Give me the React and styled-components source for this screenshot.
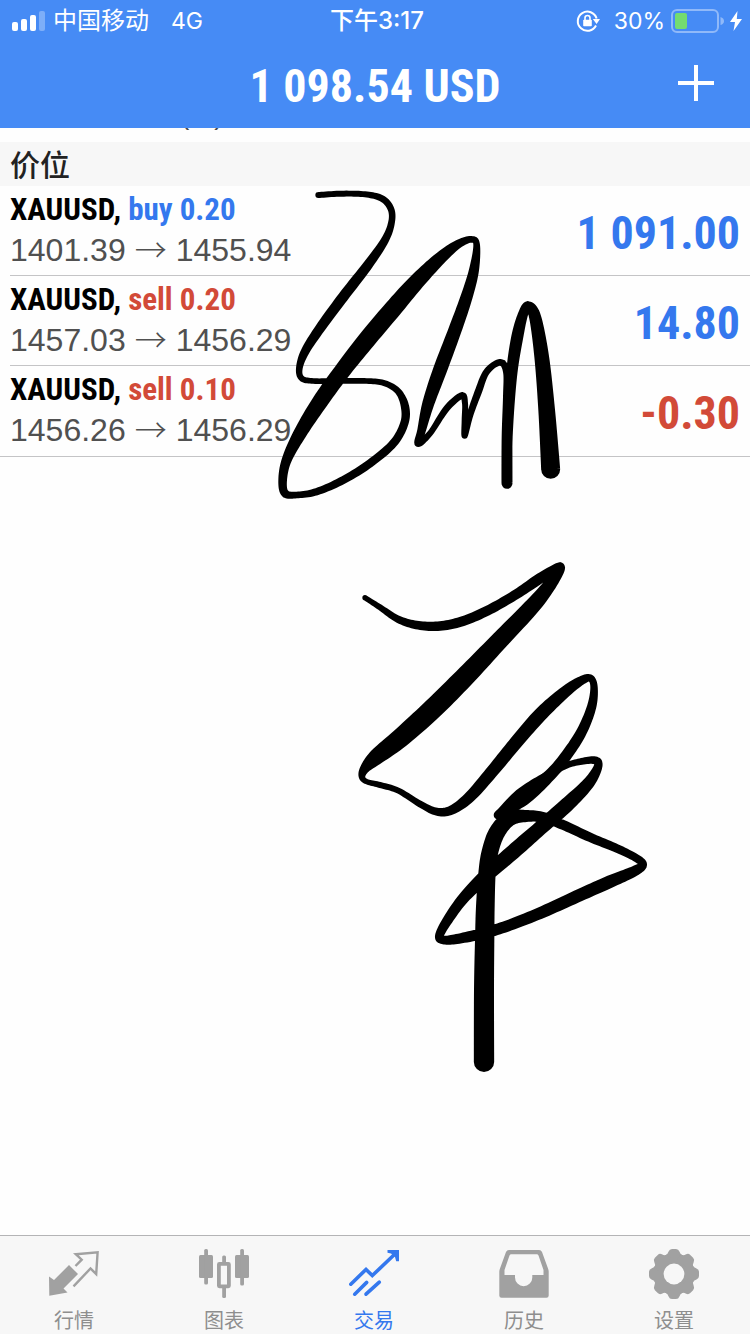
import React from 'react';
import styled, { createGlobalStyle } from 'styled-components';

const BLUE = '#3478ee';
const RED = '#d24a38';
const GREY = '#a1a1a1';
const BAR = '#f7f7f7';
const CONDENSED = '"Roboto Condensed", "Liberation Sans", sans-serif';

const GlobalStyle = createGlobalStyle`
  * { box-sizing: border-box; }
  body {
    margin: 0;
    background: #fefefe;
    font-family: "Liberation Sans", "Noto Sans CJK SC", sans-serif;
  }
`;

const Page = styled.div`
  position: relative;
  display: flex;
  flex-direction: column;
  min-height: 100vh;
`;

const Header = styled.header`
  background: #468bf5;
  color: #fff;
`;

const StatusBar = styled.div`
  display: grid;
  grid-template-columns: 1fr auto 1fr;
  align-items: center;
  height: 40px;
  padding: 2px 8px 0 12px;
  font-family: Inter, "Noto Sans CJK SC", sans-serif;
  font-size: 23px;
  line-height: 38px;
`;

const StatusGroup = styled.div`
  display: flex;
  align-items: center;
  justify-content: ${(p) => (p.$end ? 'flex-end' : 'flex-start')};
  gap: ${(p) => p.$gap}px;
`;

const Carrier = styled.span`
  font-size: 24px;
  margin-right: 14px;
`;

const Time = styled.time`
  font-size: 24px;
  font-weight: 500;
`;

const Rotation = styled.svg`
  margin-right: 8px;
`;

const TitleBar = styled.div`
  display: grid;
  grid-template-columns: 1fr auto 1fr;
  align-items: center;
  height: 88px;
  padding: 0 34px;
`;

const Title = styled.h1`
  grid-column: 2;
  margin: 0;
  padding-top: 4px;
  font-family: ${CONDENSED};
  font-size: 46px;
  line-height: 84px;
  font-weight: 700;
`;

const AddButton = styled.button`
  display: flex;
  justify-self: end;
  padding: 0;
  border: 0;
  background: none;
  color: inherit;
`;

const Main = styled.main`
  flex: 1;
`;

const ScrolledRow = styled.div`
  display: flex;
  flex-direction: column;
  justify-content: flex-end;
  height: 14px;
  padding: 0 0 13px 180px;
  overflow: hidden;
  color: #4a4a4a;
  font-size: 28px;
  line-height: 28px;
`;

const SectionTitle = styled.h2`
  margin: 0;
  padding: 4px 10px 0;
  background: ${BAR};
  color: #222;
  font-size: 30px;
  line-height: 40px;
  font-weight: 500;
`;

const Positions = styled.ul`
  margin: 0;
  padding: 0;
  list-style: none;
  border-bottom: 1px solid #c4c4c6;
`;

const Position = styled.li`
  display: flex;
  align-items: center;
  justify-content: space-between;
  height: 90px;
  margin-left: 10px;
  padding-right: 10px;
  &:not(:last-child) { border-bottom: 1px solid #c4c4c6; }
`;

const Details = styled.div`
  padding-bottom: 2px;
`;

const Symbol = styled.div`
  font-family: ${CONDENSED};
  font-size: 31px;
  line-height: 40px;
  font-weight: 700;
  color: #000;
`;

const Side = styled.span`
  color: ${(p) => (p.$sell ? RED : BLUE)};
`;

const Prices = styled.div`
  display: flex;
  gap: 9px;
  color: #505050;
  font-size: 32px;
  line-height: 40px;
`;

const Arrow = styled.span`
  font-family: "Noto Sans CJK SC", sans-serif;
  font-weight: 300;
  line-height: 36px;
`;

const Profit = styled.div`
  padding-top: 4px;
  font-family: ${CONDENSED};
  font-size: 46px;
  line-height: 84px;
  font-weight: 700;
  color: ${(p) => (p.$loss ? RED : BLUE)};
`;

const TabBar = styled.nav`
  display: flex;
  height: 99px;
  border-top: 1px solid #b4b4b6;
  background: ${BAR};
`;

const Tab = styled.a`
  flex: 1;
  display: flex;
  flex-direction: column;
  align-items: center;
  gap: 9px;
  padding: 13px 2px 0 0;
  color: ${(p) => (p.$active ? BLUE : GREY)};
  text-decoration: none;
`;

const TabLabel = styled.span`
  color: ${(p) => (p.$active ? BLUE : '#8e8e8e')};
  font-size: 20px;
  line-height: 26px;
`;

const InkLayer = styled.svg`
  position: absolute;
  top: 0;
  left: 0;
  width: 100%;
  pointer-events: none;
`;

/* Pen points are [x, y, width] in thirds of a pixel, relative to each stroke's origin. */
const strokes = [
  {
    origin: [270, 170],
    points: [
      [145, 75, 18], [215, 71, 18], [285, 73, 18], [335, 85, 20], [362, 115, 20], [365, 155, 20],
      [345, 210, 24], [290, 290, 30], [220, 380, 32], [150, 475, 30], [105, 545, 26], [88, 595, 20],
      [95, 625, 18], [130, 633, 17], [200, 633, 17], [290, 633, 17], [345, 640, 18], [385, 665, 20],
      [405, 710, 25], [403, 760, 25], [370, 820, 25], [300, 880, 25], [220, 930, 24], [140, 965, 22],
      [80, 975, 20], [45, 970, 24], [38, 930, 26], [50, 870, 30], [90, 790, 40], [150, 695, 48],
      [215, 605, 50], [290, 510, 54], [370, 415, 54], [440, 335, 48], [510, 265, 38], [565, 222, 26],
      [605, 208, 20], [620, 225, 20], [612, 300, 30], [590, 380, 36], [555, 480, 40], [510, 600, 42],
      [475, 700, 36], [455, 780, 26], [445, 820, 22], [480, 790, 18], [530, 715, 20], [575, 677, 20],
      [585, 700, 18], [584, 750, 18], [584, 797, 18], [600, 735, 20], [625, 665, 22], [650, 605, 20],
      [690, 577, 20], [710, 605, 22], [712, 680, 26], [711, 800, 32], [711, 940, 33], [712, 800, 32],
      [724, 620, 34], [742, 500, 36], [760, 430, 30], [775, 408, 28], [795, 440, 36], [815, 560, 44],
      [830, 720, 50], [842, 898, 57],
    ],
  },
  {
    origin: [340, 550],
    points: [
      [75, 143, 16], [120, 172, 18], [175, 208, 22], [235, 226, 26], [300, 228, 29], [370, 213, 30],
      [450, 178, 30], [530, 132, 30], [600, 85, 32], [660, 50, 26], [640, 90, 36], [580, 165, 48],
      [480, 270, 54], [380, 375, 60], [280, 475, 62], [180, 565, 58], [110, 620, 48], [75, 655, 30],
      [66, 680, 20], [80, 695, 16], [120, 705, 18], [175, 722, 18], [240, 762, 20], [290, 785, 24],
      [335, 780, 28], [390, 740, 34], [460, 660, 38], [530, 575, 40], [600, 495, 42], [670, 430, 36],
      [720, 394, 28], [750, 384, 22], [762, 410, 22], [755, 470, 28], [725, 545, 32], [680, 615, 34],
      [630, 675, 36], [550, 745, 44], [474, 795, 26],
    ],
  },
  {
    origin: [420, 740],
    points: [
      [235, 225, 26], [300, 165, 36], [370, 115, 28], [430, 80, 20], [480, 65, 20], [525, 61, 24],
      [534, 80, 26], [505, 130, 36], [440, 195, 44], [360, 265, 44], [280, 335, 46], [200, 405, 42],
      [130, 475, 34], [80, 545, 30], [58, 588, 26], [70, 600, 26], [110, 597, 30], [190, 580, 34],
      [270, 555, 34], [370, 515, 36], [480, 465, 38], [570, 425, 38], [640, 395, 32], [668, 375, 26],
      [650, 355, 24], [590, 325, 26], [510, 292, 28], [430, 255, 30], [370, 232, 32], [320, 228, 36],
      [270, 235, 46], [232, 275, 50], [210, 335, 50], [201, 400, 52], [196, 500, 56], [194, 600, 58],
      [192, 750, 60], [192, 966, 61],
    ],
  },
];

const fmt = (n) => n.toFixed(3);

const dot = ([x, y, r]) => (
  `M${fmt(x - r)} ${fmt(y)}a${fmt(r)} ${fmt(r)} 0 0 1 ${fmt(2 * r)} 0a${fmt(r)} ${fmt(r)} 0 0 1 ${fmt(-2 * r)} 0z`
);

/* Smooths the pen points, then traces both edges of the stroke as one outline,
   with a dot at the two ends and at every sharp turn. */
function inkPath({ origin, points }) {
  const pts = points.map(([x, y, w]) => [origin[0] + x / 3, origin[1] + y / 3, w / 6]);
  const at = (i) => pts[Math.max(0, Math.min(pts.length - 1, i))];
  const samples = [];
  for (let i = 0; i < pts.length - 1; i++) {
    const [a, b, c, d] = [at(i - 1), at(i), at(i + 1), at(i + 2)];
    for (let s = 0; s < 10; s++) {
      const t = s / 10;
      samples.push([0, 1, 2].map((k) => 0.5 * (
        2 * b[k] + (c[k] - a[k]) * t
        + (2 * a[k] - 5 * b[k] + 4 * c[k] - d[k]) * t * t
        + (3 * b[k] - a[k] - 3 * c[k] + d[k]) * t * t * t)));
    }
  }
  samples.push(pts[pts.length - 1]);

  const last = samples.length - 1;
  const near = [];
  const far = [];
  let dots = dot(samples[0]) + dot(samples[last]);
  samples.forEach((p, i) => {
    const prev = samples[Math.max(0, i - 1)];
    const next = samples[Math.min(last, i + 1)];
    const angle = Math.atan2(next[1] - prev[1], next[0] - prev[0]);
    const nx = -Math.sin(angle) * p[2];
    const ny = Math.cos(angle) * p[2];
    near.push(`${fmt(p[0] - nx)} ${fmt(p[1] - ny)}`);
    far.unshift(`${fmt(p[0] + nx)} ${fmt(p[1] + ny)}`);
    if (i > 0 && i < last) {
      const inAngle = Math.atan2(p[1] - prev[1], p[0] - prev[0]);
      const outAngle = Math.atan2(next[1] - p[1], next[0] - p[0]);
      if (Math.cos(outAngle - inAngle) < 0.985) dots += dot(p);
    }
  });
  return `M${near.concat(far).join('L')}z${dots}`;
}

const inkPaths = strokes.map(inkPath);

const Icon = ({ children }) => (
  <svg width="50" height="50" viewBox="0 0 50 50" fill="none" aria-hidden="true">{children}</svg>
);

const QuotesIcon = () => (
  <Icon>
    <path fill="currentColor" d="M0 27.5L5 31L20 16L29 25L14.5 39.5L18.5 43.5L0.3 46.7z" />
    <path stroke="currentColor" strokeWidth="2.4" d="M26.5 17L32.7 10.7L26.8 5.2L48.6 3.4L47.2 25L41.5 19.5L24.5 37.3" />
  </Icon>
);

const ChartIcon = () => (
  <Icon>
    <g fill="currentColor">
      <rect x="0" y="6" width="14" height="23" rx="1.5" />
      <rect x="5.2" y="0" width="3.8" height="35.5" rx="1.5" />
      <rect x="36" y="6" width="14" height="23" rx="1.5" />
      <rect x="41.2" y="0" width="3.8" height="36.5" rx="1.5" />
      <rect x="23.2" y="6.5" width="3.8" height="8" rx="1.5" />
      <rect x="23.2" y="37" width="3.8" height="12" rx="1.5" />
    </g>
    <rect x="19.9" y="14.9" width="10" height="22.4" rx="0.5" stroke="currentColor" strokeWidth="3.8" />
  </Icon>
);

const TradeIcon = () => (
  <Icon>
    <g stroke="currentColor" strokeWidth="3.6" strokeLinecap="round">
      <path d="M1.8 35.2L17 20.4L23.3 26.6L47 4" />
      <path d="M5.7 45.2L17.7 33.4M17 45.2L30.3 33.2" />
    </g>
    <path fill="currentColor" d="M38.5 0.9H50V12.3H47.2L46 8L42 4.6L38.5 3.8z" />
  </Icon>
);

const HistoryIcon = () => (
  <Icon>
    <path
      fill="currentColor"
      fillRule="evenodd"
      d="M10 1H40Q42.200 1 43 3L49.200 20Q49.700 21.500 49.700 23V46.500Q49.700 48.700 47.500 48.700H2.500Q0.300 48.700 0.300 46.500V23Q0.300 21.500 0.800 20L7 3Q7.800 1 10 1zM12.300 5.300Q11 5.300 10.500 6.600L5.500 21V26H16V28.500A8.600 8.600 0 0 0 33.300 28.500V26H44.500V21L39.500 6.600Q39 5.300 37.700 5.300z"
    />
  </Icon>
);

const SettingsIcon = () => (
  <Icon>
    <g fill="currentColor">
      <circle cx="25" cy="25" r="20.6" />
      {[0, 45, 90, 135, 180, 225, 270, 315].map((a) => (
        <path key={a} transform={`rotate(${a} 25 25)`} d="M16 6.500Q18.800 5.500 19.600 2.500Q20.500 0 23 0H27Q29.500 0 30.400 2.500Q31.200 5.500 34 6.500V12H16z" />
      ))}
    </g>
    <circle cx="25" cy="25" r="10.4" fill={BAR} />
  </Icon>
);

const positions = [
  { side: 'buy', volume: '0.20', open: '1401.39', current: '1455.94', profit: '1 091.00' },
  { side: 'sell', volume: '0.20', open: '1457.03', current: '1456.29', profit: '14.80' },
  { side: 'sell', volume: '0.10', open: '1456.26', current: '1456.29', profit: '-0.30' },
];

const tabs = [
  { label: '行情', icon: QuotesIcon },
  { label: '图表', icon: ChartIcon },
  { label: '交易', icon: TradeIcon, active: true },
  { label: '历史', icon: HistoryIcon },
  { label: '设置', icon: SettingsIcon },
];

export default function App() {
  return (
    <Page>
      <GlobalStyle />
      <Header>
        <StatusBar>
          <StatusGroup $gap={8}>
            <svg width="33" height="20" viewBox="0 0 33 20" fill="#fff" aria-hidden="true">
              <rect x="0" y="11" width="6" height="9" rx="2" />
              <rect x="9" y="8" width="6" height="12" rx="2" />
              <rect x="18" y="4" width="6" height="16" rx="2" />
              <rect x="27" y="0" width="6" height="20" rx="2" opacity="0.3" />
            </svg>
            <Carrier>中国移动</Carrier>
            <span>4G</span>
          </StatusGroup>
          <Time>下午3:17</Time>
          <StatusGroup $end $gap={6}>
            <Rotation width="24" height="24" viewBox="0 0 24 24" fill="none" aria-hidden="true">
              <path d="M20 16.500A9.600 9.600 0 1 1 20.600 9.500" stroke="#fff" strokeWidth="2" />
              <path d="M16.800 10H24L20.600 15z" fill="#fff" />
              <rect x="7.200" y="10.700" width="8.600" height="6.500" rx="0.800" fill="#fff" />
              <path d="M9 11V9a2.500 2.500 0 0 1 5 0V11" stroke="#fff" strokeWidth="1.600" />
            </Rotation>
            <span>30%</span>
            <svg width="53" height="24" viewBox="0 0 53 24" fill="none" aria-hidden="true">
              <rect x="1" y="1" width="46" height="22" rx="5" stroke="#fff" strokeOpacity="0.4" strokeWidth="2" />
              <rect x="4" y="4" width="12" height="16" rx="2" fill="#74dc70" />
              <path d="M49.500 8Q53 9 53 12T49.500 16z" fill="#fff" fillOpacity="0.4" />
            </svg>
            <svg width="12" height="20" viewBox="0 0 12 20" fill="#fff" aria-hidden="true">
              <path d="M7.500 0L0 11H5L3.500 20L12 8H6.800z" />
            </svg>
          </StatusGroup>
        </StatusBar>
        <TitleBar>
          <Title>1 098.54 USD</Title>
          <AddButton type="button" aria-label="Add">
            <svg width="40" height="40" viewBox="0 0 40 40" aria-hidden="true">
              <path d="M2 19H38M20 1V37" stroke="#fff" strokeWidth="4" />
            </svg>
          </AddButton>
        </TitleBar>
      </Header>
      <Main>
        <ScrolledRow>(%)</ScrolledRow>
        <SectionTitle>价位</SectionTitle>
        <Positions>
          {positions.map((p) => (
            <Position key={p.open}>
              <Details>
                <Symbol>
                  XAUUSD, <Side $sell={p.side === 'sell'}>{p.side} {p.volume}</Side>
                </Symbol>
                <Prices>
                  <span>{p.open}</span>
                  <Arrow>→</Arrow>
                  <span>{p.current}</span>
                </Prices>
              </Details>
              <Profit $loss={p.profit.startsWith('-')}>{p.profit}</Profit>
            </Position>
          ))}
        </Positions>
      </Main>
      <TabBar>
        {tabs.map(({ label, icon: TabIcon, active }) => (
          <Tab key={label} href="#" $active={active}>
            <TabIcon />
            <TabLabel $active={active}>{label}</TabLabel>
          </Tab>
        ))}
      </TabBar>
      <InkLayer viewBox="0 0 750 1334" aria-hidden="true">
        {inkPaths.map((d, i) => <path key={i} d={d} fill="#000" />)}
      </InkLayer>
    </Page>
  );
}
